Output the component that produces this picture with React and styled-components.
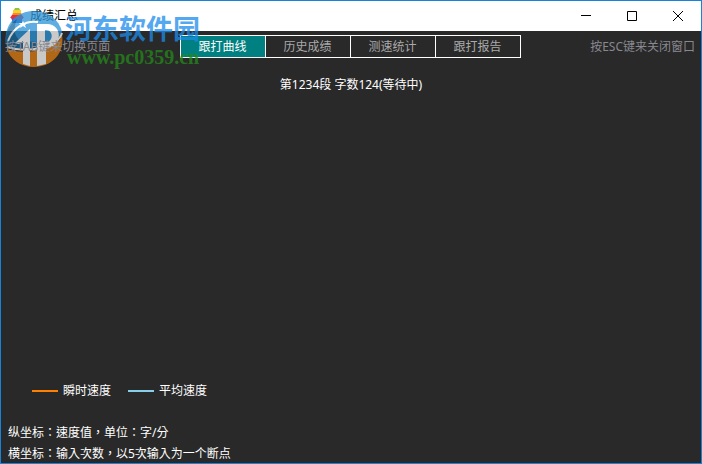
import React, { useState } from "react";
import styled, { createGlobalStyle } from "styled-components";

const GlobalStyle = createGlobalStyle`
  * {
    box-sizing: border-box;
  }

  body {
    margin: 0;
    background: #292929;
    color: #ffffff;
    font-family: "Noto Sans", "Noto Sans CJK SC", sans-serif;
    font-size: 12px;
    line-height: 20px;
  }

  button {
    font: inherit;
  }
`;

const tabs = ["跟打曲线", "历史成绩", "测速统计", "跟打报告"];

const series = [
  { name: "瞬时速度", color: "#ff8000" },
  { name: "平均速度", color: "#87ceeb" },
];

const AppIcon = () => (
  <svg width="16" height="16" viewBox="0 0 16 16" aria-hidden="true">
    <path d="M6 0h4l1 2H5z" fill="#8cc63f" />
    <path d="M4 2h8v3H4z" fill="#f7d02c" />
    <path d="M4 5h8l1 2H3z" fill="#f58a2a" />
    <path d="M3 7h10l2 3H1z" fill="#e8303c" />
    <path d="M2 10h12l-1 2H3z" fill="#a03c8c" />
    <path d="M3 12h10v3H3z" fill="#3a62c8" />
  </svg>
);

// blue upper half, orange lower half, white "1P" cut through both
const WatermarkLogo = () => (
  <svg width="60" height="58" viewBox="0 0 60 58" aria-hidden="true">
    <path d="M1 35C-2 14 12 1 29 1 43 1 54 9 57 22 53 30 44 35 32 37 20 39 8 38 1 35z" fill="#2b94d8" />
    <path d="M1 35C-1 25 4 15 12 9 8 19 9 28 17 31L32 32V37C20 39 8 38 1 35z" fill="#12679e" />
    <path d="M2 39C14 43 26 42 36 40 48 37 55 32 57 25 60 43 47 57 29 57 15 57 5 49 2 39z" fill="#e07c12" />
    <path d="M2 37C14 41 26 40 36 38 48 35 55 30 57 23" fill="none" stroke="#fff" strokeWidth="2" />
    <path d="M3 31C8 18 20 10 33 12" fill="none" stroke="#fff" strokeWidth="2" />
    <path d="M10 33L25 19V56L18 54V31L14 34z" fill="#fff" />
    <path d="M32 14H42C58 14 58 38 41 38V54L32 56zM40 20V32C49 33 49 19 40 20z" fill="#fff" fillRule="evenodd" />
    <path d="M18 11l1 2 3 0-2 2 1 3-3-2-3 2 1-3-2-2 3 0z" fill="#fff" />
  </svg>
);

export default function App() {
  const [active, setActive] = useState(tabs[0]);

  return (
    <>
      <GlobalStyle />
      <Window>
        <TitleBar>
          <AppIcon />
          <Title>成绩汇总</Title>
          <WindowButton aria-label="最小化">
            <svg width="10" height="10" viewBox="0 0 10 10">
              <path d="M0 4.5h10" stroke="#000" />
            </svg>
          </WindowButton>
          <WindowButton aria-label="最大化">
            <svg width="10" height="10" viewBox="0 0 10 10">
              <path d="M.5.5h9v9h-9z" fill="none" stroke="#000" />
            </svg>
          </WindowButton>
          <WindowButton aria-label="关闭">
            <svg width="10" height="10" viewBox="0 0 10 10">
              <path d="M0 0l10 10M10 0L0 10" stroke="#000" />
            </svg>
          </WindowButton>
        </TitleBar>

        <Toolbar>
          <Hint>按TAB键来切换页面</Hint>
          <TabList role="tablist">
            {tabs.map((tab) => (
              <Tab
                key={tab}
                role="tab"
                aria-selected={tab === active}
                $active={tab === active}
                onClick={() => setActive(tab)}
              >
                {tab}
              </Tab>
            ))}
          </TabList>
          <Hint $end>按ESC键来关闭窗口</Hint>
        </Toolbar>

        <Chart>
          <ChartTitle>第1234段 字数124(等待中)</ChartTitle>
          <Legend>
            {series.map(({ name, color }) => (
              <LegendItem key={name}>
                <Swatch $color={color} />
                {name}
              </LegendItem>
            ))}
          </Legend>
        </Chart>

        <Notes>
          <Note>纵坐标：速度值，单位：字/分</Note>
          <Note>横坐标：输入次数，以5次输入为一个断点</Note>
        </Notes>

        <Watermark>
          <WatermarkLogo />
          <div>
            <WatermarkName>河东软件园</WatermarkName>
            <WatermarkUrl>www.pc0359.cn</WatermarkUrl>
          </div>
        </Watermark>
      </Window>
    </>
  );
}

const Window = styled.div`
  position: relative;
  display: flex;
  flex-direction: column;
  min-height: 100vh;
  border: 1px solid #1883d7;
`;

const TitleBar = styled.header`
  display: flex;
  align-items: center;
  height: 30px;
  padding-left: 8px;
  background: #ffffff;
  color: #000000;
`;

const Title = styled.h1`
  flex: 1;
  margin: 0 0 0 5px;
  font-size: 12px;
  font-weight: 400;
`;

const WindowButton = styled.button`
  display: flex;
  align-items: center;
  justify-content: center;
  width: 46px;
  height: 30px;
  padding: 0;
  border: none;
  background: transparent;
`;

const Toolbar = styled.div`
  display: grid;
  grid-template-columns: 1fr auto 1fr;
  align-items: center;
  padding: 4px 6px 0 4px;
`;

// sits over the watermark so that it stays readable
const Hint = styled.span`
  position: relative;
  z-index: 1;
  color: #888890;
  text-align: ${(props) => (props.$end ? "right" : "left")};
`;

const TabList = styled.div`
  display: flex;
  border: 1px solid #ffffff;
`;

const Tab = styled.button`
  width: 85px;
  height: 21px;
  padding: 0;
  border: none;
  border-right: 1px solid #ffffff;
  background: ${(props) => (props.$active ? "#008080" : "transparent")};
  color: ${(props) => (props.$active ? "#ffffff" : "#a9a9a9")};
  line-height: 20px;

  &:last-child {
    width: 84px;
    border-right: none;
  }
`;

const Chart = styled.main`
  display: flex;
  flex: 1;
  flex-direction: column;
  justify-content: space-between;
  padding: 17px 0 21px;
`;

const ChartTitle = styled.h2`
  margin: 0;
  font-size: 12px;
  font-weight: 400;
  text-align: center;
`;

const Legend = styled.div`
  display: flex;
  gap: 17px;
  padding-left: 31px;
`;

const LegendItem = styled.span`
  display: flex;
  align-items: center;
  gap: 5px;
`;

const Swatch = styled.span`
  width: 26px;
  height: 2px;
  background: ${(props) => props.$color};
`;

// the TC face centres the full-width colon and comma in their cells
const Notes = styled.footer`
  margin-bottom: -1px;
  padding-left: 7px;
  font-family: "Noto Sans", "Noto Sans CJK TC", sans-serif;
`;

const Note = styled.p`
  margin: 0;
  line-height: 21px;
`;

const Watermark = styled.div`
  position: absolute;
  top: 9px;
  left: 4px;
  display: flex;
  opacity: 0.75;
  pointer-events: none;
`;

const WatermarkName = styled.div`
  color: #1b8ceb;
  font-size: 27px;
  font-weight: 700;
  line-height: 38px;
`;

const WatermarkUrl = styled.div`
  padding-left: 2px;
  color: #258a1a;
  font-family: "Liberation Serif", serif;
  font-size: 20px;
  font-weight: 700;
  line-height: 18px;
`;
